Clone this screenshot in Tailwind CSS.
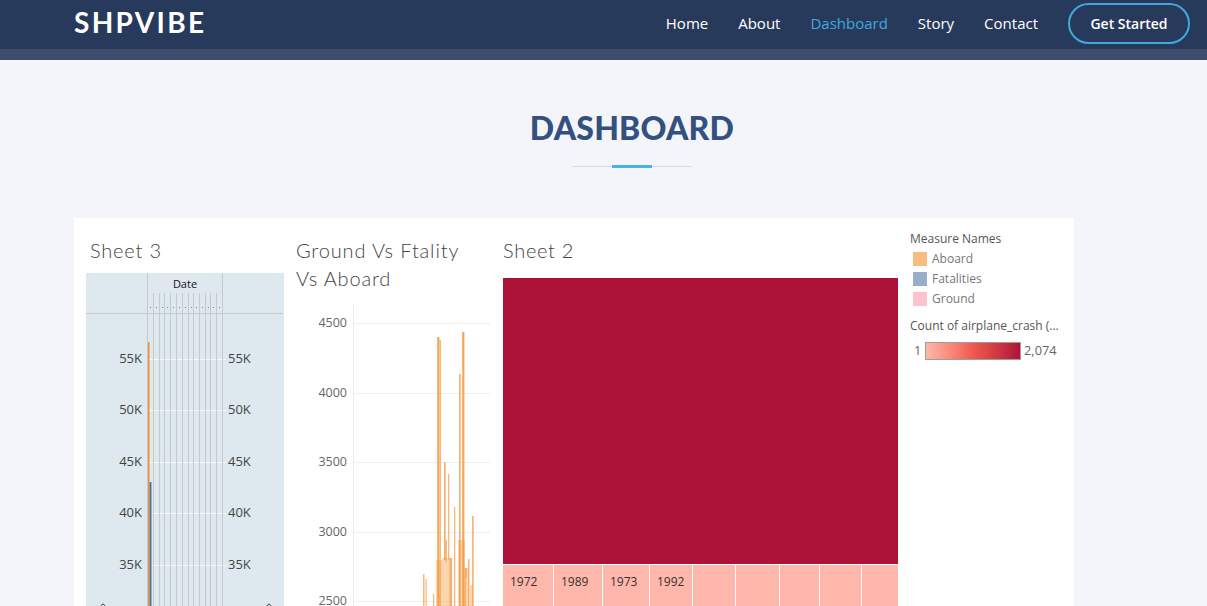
<!DOCTYPE html>
<html>
<head>
<meta charset="utf-8">
<script src="https://cdn.jsdelivr.net/npm/@tailwindcss/browser@4"></script>
</head>
<body class="m-0 h-[606px] overflow-hidden bg-[#f3f5fa] font-['Open_Sans',sans-serif]">
<header class="h-[60px] border-b-[11px] border-[#3f4d6d] bg-[#283a5c]">
  <div class="flex h-[49px] items-center justify-between pl-[74px] pr-[17px]">
    <div class="-mt-[6px] font-['Lato',sans-serif] text-[28px] leading-none font-bold tracking-[2.3px] text-white">SHPVIBE</div>
    <nav class="-mt-[2px] flex items-center text-[15px] text-white">
      <a class="mr-[30px]">Home</a>
      <a class="mr-[30px]">About</a>
      <a class="mr-[30px] text-[#3fa9dc]">Dashboard</a>
      <a class="mr-[30px]">Story</a>
      <a class="mr-[30px]">Contact</a>
      <a class="flex h-[41px] w-[122px] items-center justify-center rounded-[21px] border-2 border-[#3fa9dc] text-[14px] font-semibold">Get Started</a>
    </nav>
  </div>
</header>
<main>
  <div class="flex h-[158px] flex-col items-center pt-[48px] pl-[57px]">
    <h1 class="font-['Lato',sans-serif] text-[32px] leading-[40px] font-black tracking-[0.2px] text-[#34507f]">DASHBOARD</h1>
    <div class="relative mt-[18px] h-px w-[120px] bg-[#dcdde0]">
      <div class="absolute top-[-1px] left-[40px] h-[3px] w-[40px] bg-[#47b2e4]"></div>
    </div>
  </div>
  <section class="ml-[74px] flex h-[388px] w-[1000px] overflow-hidden bg-white font-['Lato',sans-serif]">
    <div class="ml-[12px] w-[198px] shrink-0">
      <h2 class="mt-[19px] ml-[4px] h-[36px] text-[20px] leading-[26px] font-light tracking-[0.8px] text-[#444]">Sheet 3</h2>
      <svg width="198" height="333" viewBox="86 273 198 333" class="block font-['Open_Sans',sans-serif]">
        <rect x="86" y="273" width="198" height="333" fill="#dde9ef"/>
        <g stroke="#ffffff" stroke-width="1" opacity=".8">
          <path d="M147 359.500H226M147 410.500H226M147 462.500H226M147 513.500H226M147 565.500H226"/>
        </g>
        <g stroke="#c9c9c9" stroke-width="1">
          <path d="M86 313.500H283M147.500 273V606M222.500 273V313"/>
          <path d="M153.500 293V606M159.500 293V606M164.500 293V606M170.500 293V606M176.500 293V606M182.500 293V606M188.500 293V606M193.500 293V606M199.500 293V606M205.500 293V606M210.500 293V606M216.500 293V606M222.500 293V606"/>
        </g>
        <g fill="#4a97b8">
          <rect x="150" y="307" width="1" height="1"/><rect x="156" y="307" width="1" height="1"/><rect x="162" y="307" width="1" height="1"/><rect x="167" y="307" width="1" height="1"/><rect x="173" y="307" width="1" height="1"/><rect x="179" y="307" width="1" height="1"/><rect x="185" y="307" width="1" height="1"/><rect x="191" y="307" width="1" height="1"/><rect x="196" y="307" width="1" height="1"/><rect x="202" y="307" width="1" height="1"/><rect x="208" y="307" width="1" height="1"/><rect x="213" y="307" width="1" height="1"/><rect x="219" y="307" width="1" height="1"/>
        </g>
        <text x="185" y="288" text-anchor="middle" font-size="11" fill="#111">Date</text>
        <rect x="148" y="342" width="1.500" height="264" fill="#f28e2b"/>
        <rect x="149.500" y="482" width="2" height="124" fill="#4e79a7"/>
        <g font-size="13" fill="#444" text-anchor="end">
          <text x="142" y="363">55K</text><text x="142" y="414">50K</text><text x="142" y="466">45K</text><text x="142" y="517">40K</text><text x="142" y="569">35K</text>
        </g>
        <g font-size="13" fill="#444">
          <text x="228" y="363">55K</text><text x="228" y="414">50K</text><text x="228" y="466">45K</text><text x="228" y="517">40K</text><text x="228" y="569">35K</text>
        </g>
        <path d="M101 606Q103 602 105 606M267 606Q269 602 271 606" fill="none" stroke="#444"/>
      </svg>
    </div>
    <div class="ml-[8px] w-[198px] shrink-0">
      <h2 class="mt-[18px] ml-[4px] h-[65px] text-[20px] leading-[28px] font-light tracking-[0.85px] text-[#444]">Ground Vs Ftality<br>Vs Aboard</h2>
      <svg width="198" height="305" viewBox="292 301 198 305" class="block font-['Open_Sans',sans-serif]">
        <path d="M353.500 303V606" stroke="#efefef"/>
        <path d="M353 323.500H490M353 393.500H490M353 462.500H490M353 532.500H490M353 601.500H490" stroke="#efefef"/>
        <g font-size="12.500" fill="#666" text-anchor="end">
          <text x="347" y="327">4500</text><text x="347" y="397">4000</text><text x="347" y="466">3500</text><text x="347" y="536">3000</text><text x="347" y="605">2500</text>
        </g>
        <g fill="#f8ab5e" fill-opacity=".5">
          <rect x="436" y="560" width="6" height="46"/>
          <rect x="442" y="558" width="10" height="48"/>
          <rect x="458" y="540" width="7" height="66"/>
          <rect x="465" y="568" width="4" height="38"/>
          <rect x="470" y="585" width="3" height="21"/>
        </g>
        <g fill="#f5a04f" fill-opacity=".75">
          <rect x="423" y="574" width="1.500" height="32"/>
          <rect x="425.500" y="579" width="1.200" height="27"/>
          <rect x="433" y="594" width="1.200" height="12"/>
          <rect x="437" y="337" width="2.500" height="269"/>
          <rect x="439.500" y="340" width="1.500" height="266"/>
          <rect x="444" y="462" width="1.500" height="98"/>
          <rect x="445.500" y="540" width="1.500" height="22"/>
          <rect x="448" y="474" width="1.300" height="86"/>
          <rect x="449.500" y="558" width="2.500" height="48"/>
          <rect x="454" y="507" width="1.300" height="99"/>
          <rect x="459" y="374" width="1.500" height="232"/>
          <rect x="462" y="332" width="2.500" height="274"/>
          <rect x="464.500" y="568" width="1.500" height="38"/>
          <rect x="468" y="559" width="1.500" height="47"/>
          <rect x="472" y="516" width="1.800" height="90"/>
        </g>
        <g fill="#f28e2b" fill-opacity=".45">
          <rect x="438" y="337" width="1" height="269"/>
          <rect x="444.500" y="462" width="1" height="98"/>
          <rect x="459.500" y="374" width="1" height="232"/>
          <rect x="463" y="332" width="1" height="274"/>
          <rect x="466" y="568" width="1" height="10"/>
        </g>
      </svg>
    </div>
    <div class="ml-[13px] w-[395px] shrink-0">
      <h2 class="mt-[19px] h-[41px] text-[20px] leading-[26px] font-light tracking-[0.7px] text-[#444]">Sheet 2</h2>
      <div class="h-[286px] bg-[#ad1238]"></div>
      <div class="mt-px flex h-[41px] gap-px font-['Open_Sans',sans-serif] text-[12px] leading-[17px] text-[#333]">
        <div class="w-[50px] bg-[#ffb6ab] pt-[8px] pl-[7px]">1972</div>
        <div class="w-[48px] bg-[#ffb6ab] pt-[8px] pl-[7px]">1989</div>
        <div class="w-[46px] bg-[#ffb6ab] pt-[8px] pl-[7px]">1973</div>
        <div class="w-[42px] bg-[#ffb6ab] pt-[8px] pl-[7px]">1992</div>
        <div class="w-[42px] bg-[#ffb6ab]"></div>
        <div class="w-[43px] bg-[#ffb6ab]"></div>
        <div class="w-[39px] bg-[#ffb6ab]"></div>
        <div class="w-[41px] bg-[#ffb6ab]"></div>
        <div class="flex-1 bg-[#ffb6ab]"></div>
      </div>
    </div>
    <aside class="ml-[12px] w-[160px] shrink-0 pt-[14px] font-['Open_Sans',sans-serif] text-[12px] leading-[14px] text-[#555]">
      <div>Measure Names</div>
      <div class="mt-[3px] flex h-[20px] items-center pl-[3px]"><span class="mr-[5px] h-[14px] w-[14px] bg-[#f8bc7f]"></span><span class="text-[#777]">Aboard</span></div>
      <div class="flex h-[20px] items-center pl-[3px]"><span class="mr-[5px] h-[14px] w-[14px] bg-[#98afca]"></span><span class="text-[#777]">Fatalities</span></div>
      <div class="flex h-[20px] items-center pl-[3px]"><span class="mr-[5px] h-[14px] w-[14px] bg-[#ffc2cc]"></span><span class="text-[#777]">Ground</span></div>
      <div class="mt-[10px]">Count of airplane_crash (...</div>
      <div class="mt-[9px] flex h-[18px] items-center text-[12.8px] text-[#666]">
        <span class="-mt-[2px] w-[15px] pl-[4px]">1</span>
        <span class="h-[18px] w-[96px] border border-[#a39c90] bg-gradient-to-r from-[#ffb6ab] via-[#f0594e] to-[#ad1238]"></span>
        <span class="-mt-[2px] ml-[3px]">2,074</span>
      </div>
    </aside>
  </section>
</main>
</body>
</html>
